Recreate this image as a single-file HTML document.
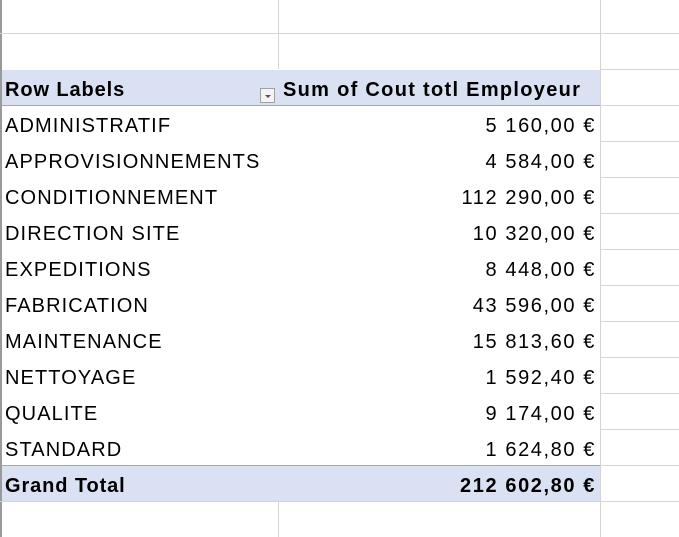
<!DOCTYPE html>
<html><head><style>
body{margin:0;width:679px;height:537px;background:#fff;position:relative;overflow:hidden;font-family:"Liberation Sans",Arial,sans-serif;font-size:20px;letter-spacing:1.1px;color:#000}
.l{position:absolute;background:#d4d4d4}
.t{position:absolute;white-space:nowrap;line-height:36px;height:36px}
.r{text-align:right;left:278px;width:318px;letter-spacing:1.6px}
.b{font-weight:bold;letter-spacing:0.9px}
.r.b{letter-spacing:1.6px}
</style></head><body>
<div class="l" style="left:0;top:0;width:2px;height:537px;background:#9a9a9a"></div>
<div class="l" style="left:278px;top:0;width:1px;height:69px"></div>
<div class="l" style="left:278px;top:501px;width:1px;height:36px"></div>
<div class="l" style="left:600px;top:0;width:1px;height:537px"></div>
<div class="l" style="left:0;top:33px;width:679px;height:1px"></div>
<div class="l" style="left:600px;top:69px;width:79px;height:1px"></div>
<div style="position:absolute;left:2px;top:70px;width:598px;height:35px;background:#d9e1f2"></div>
<div class="l" style="left:2px;top:105px;width:598px;height:1px;background:#8ea9db"></div>
<div style="position:absolute;left:2px;top:466px;width:598px;height:35px;background:#d9e1f2"></div>
<div class="l" style="left:2px;top:465px;width:598px;height:1px;background:#8ea9db"></div>
<div class="l" style="left:600px;top:105px;width:79px;height:1px"></div>
<div class="l" style="left:600px;top:141px;width:79px;height:1px"></div>
<div class="l" style="left:600px;top:177px;width:79px;height:1px"></div>
<div class="l" style="left:600px;top:213px;width:79px;height:1px"></div>
<div class="l" style="left:600px;top:249px;width:79px;height:1px"></div>
<div class="l" style="left:600px;top:285px;width:79px;height:1px"></div>
<div class="l" style="left:600px;top:321px;width:79px;height:1px"></div>
<div class="l" style="left:600px;top:357px;width:79px;height:1px"></div>
<div class="l" style="left:600px;top:393px;width:79px;height:1px"></div>
<div class="l" style="left:600px;top:429px;width:79px;height:1px"></div>
<div class="l" style="left:600px;top:465px;width:79px;height:1px"></div>
<div class="l" style="left:0;top:501px;width:679px;height:1px"></div>
<div style="position:absolute;left:260px;top:88px;width:15px;height:15px;border:1px solid #a0a0a0;background:#f4f4f4;box-sizing:border-box"><div style="position:absolute;left:4px;top:6px;width:0;height:0;border-left:3px solid transparent;border-right:3px solid transparent;border-top:3px solid #555"></div></div>
<div class="t b" style="left:5px;top:72px">Row Labels</div>
<div class="t b" style="left:283px;top:72px;letter-spacing:1.3px">Sum of Cout totl Employeur</div>
<div class="t" style="left:5px;top:108px">ADMINISTRATIF</div><div class="t r" style="top:108px">5 160,00 €</div>
<div class="t" style="left:5px;top:144px">APPROVISIONNEMENTS</div><div class="t r" style="top:144px">4 584,00 €</div>
<div class="t" style="left:5px;top:180px">CONDITIONNEMENT</div><div class="t r" style="top:180px">112 290,00 €</div>
<div class="t" style="left:5px;top:216px">DIRECTION SITE</div><div class="t r" style="top:216px">10 320,00 €</div>
<div class="t" style="left:5px;top:252px">EXPEDITIONS</div><div class="t r" style="top:252px">8 448,00 €</div>
<div class="t" style="left:5px;top:288px">FABRICATION</div><div class="t r" style="top:288px">43 596,00 €</div>
<div class="t" style="left:5px;top:324px">MAINTENANCE</div><div class="t r" style="top:324px">15 813,60 €</div>
<div class="t" style="left:5px;top:360px">NETTOYAGE</div><div class="t r" style="top:360px">1 592,40 €</div>
<div class="t" style="left:5px;top:396px">QUALITE</div><div class="t r" style="top:396px">9 174,00 €</div>
<div class="t" style="left:5px;top:432px">STANDARD</div><div class="t r" style="top:432px">1 624,80 €</div>
<div class="t b" style="left:5px;top:468px">Grand Total</div><div class="t r b" style="top:468px">212 602,80 €</div>
</body></html>
